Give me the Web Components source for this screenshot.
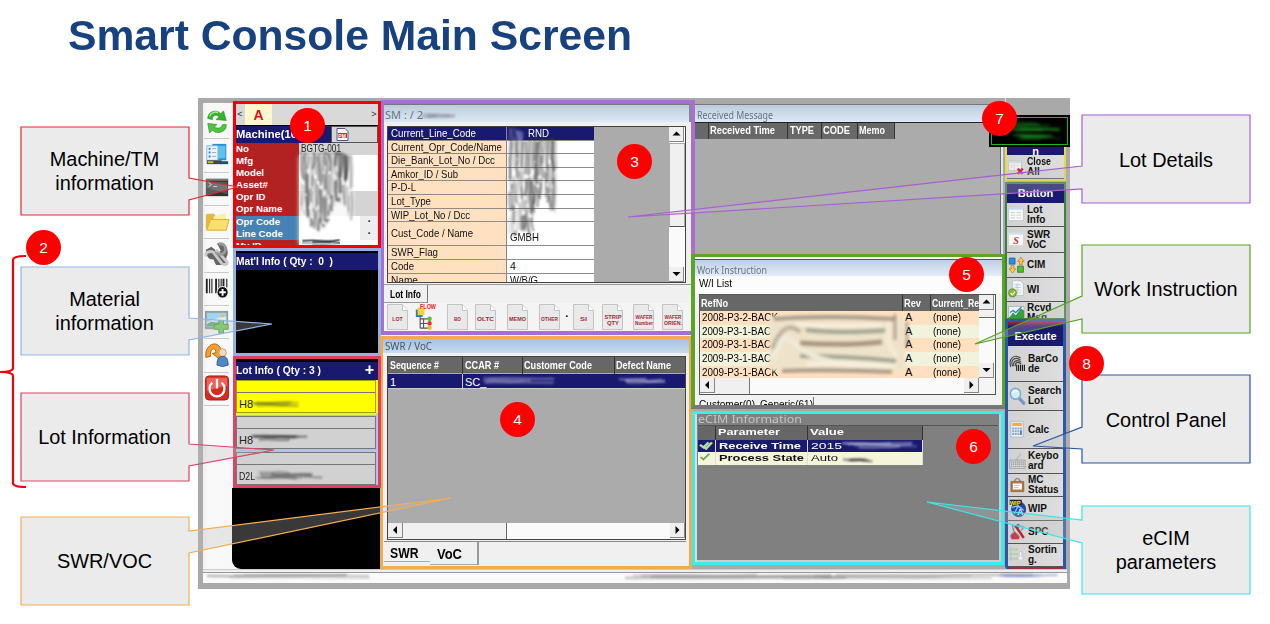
<!DOCTYPE html>
<html lang="en">
<head>
<meta charset="utf-8">
<title>Smart Console Main Screen</title>
<style>
html,body{margin:0;background:#fff}
body{width:1270px;height:624px;overflow:hidden;font-family:"Liberation Sans",Arial,sans-serif}
</style>
</head>
<body>
<smart-slide></smart-slide>
<script>
const BASE = `*{box-sizing:border-box} :host{display:block;box-sizing:border-box}`;
function component(name, css, html) {
  customElements.define(name, class extends HTMLElement {
    connectedCallback() {
      if (this.shadowRoot) return;
      const root = this.attachShadow({mode: 'open'});
      root.innerHTML = `<style>${BASE}${css}</style>` + (typeof html === 'function' ? html(this) : html);
    }
  });
}

/* Text squeezed or stretched to a given width */
customElements.define('fit-text', class extends HTMLElement {
  connectedCallback() {
    if (this.shadowRoot) return;
    const root = this.attachShadow({mode: 'open'});
    root.innerHTML = `<style>:host{display:inline-block;white-space:pre;vertical-align:top;flex:none}span{display:inline-block;transform-origin:0 50%}</style><span><slot></slot></span>`;
    const s = root.querySelector('span'), w = +this.getAttribute('w'), n = s.getBoundingClientRect().width;
    this.style.width = w + 'px';
    if (n) s.style.transform = `scaleX(${w / n})`;
  }
});

/* Scribbled-out value: streaks in one direction */
component('smear-mark', `:host{position:absolute;pointer-events:none}svg{display:block;overflow:visible}`, el => {
  const w = +el.getAttribute('w'), h = +el.getAttribute('h'), c = el.getAttribute('c') || '#333';
  const k = el.getAttribute('kind') || 'h';
  let seed = +(el.getAttribute('seed') || 7);
  const r = () => (seed = (seed * 16807) % 2147483647) / 2147483647;
  let p = '';
  if (k === 'v') {
    const peak = el.getAttribute('peak').split(',').map(Number);
    const at = t => { const i = Math.min(peak.length - 2, Math.floor(t * (peak.length - 1))), f = t * (peak.length - 1) - i; return peak[i] * (1 - f) + peak[i + 1] * f; };
    for (let x = 0; x < w; x += 2) {
      const b = at(x / w) * h;
      for (let y = r() * 5; y < b; ) {
        const l = 14 + r() * 30, e = Math.min(b, y + l);
        p += `<path d="M${x + r()} ${y}q${r() * 4 - 2} ${(e - y) / 2} ${r() * 4 - 2} ${e - y}" stroke="${c}" stroke-opacity="${.15 + r() * .6}" stroke-width="${1.200 + r() * 1.500}" fill="none"/>`;
        y = e + 1 + r() * 6;
      }
    }
  } else {
    const n = Math.max(4, h * .8);
    for (let i = 0; i < n; i++) {
      const x = r() * w * .25, y = r() * h, l = w * (.45 + r() * .5);
      p += `<path d="M${x} ${y}q${l / 4} ${r() * 2 - 1} ${l / 2} 0t${Math.min(l, w - x) / 2} ${r() * 2 - 1}" stroke="${c}" stroke-opacity="${.25 + r() * .4}" stroke-width="${1.200 + r() * 1.200}" fill="none"/>`;
    }
  }
  return `<svg width="${w}" height="${h}" style="filter:blur(${el.getAttribute('blur') || 1}px)">${p}</svg>`;
});

component('num-badge', `:host{position:absolute;width:35px;height:35px;border-radius:50%;background:#fe0000;color:#fff;font:15.5px/35px "Liberation Sans",Arial,sans-serif;text-align:center;z-index:9}`, `<slot></slot>`);

/* Callout: a box with a pointer drawn from one of its sides */
component('callout-box', `
:host{position:relative;width:168px;height:88px;display:flex;align-items:center;justify-content:center;text-align:center;font-size:19.9px;line-height:24px;color:#000}
svg{position:absolute;left:0;top:0;overflow:visible}
span{position:relative;padding-top:1px}`, el => {
  const [a, tx, ty, b] = el.getAttribute('tail').split(',').map(Number);
  const d = el.hasAttribute('right')
    ? `M0 0H168V88H0V${b}L${tx} ${ty}L0 ${a}Z`
    : `M0 0H168V${a}L${tx} ${ty}L168 ${b}V88H0Z`;
  return `<svg width="168" height="88"><path d="${d}" fill="#bcbcbc" fill-opacity=".3" stroke="${el.getAttribute('c')}" stroke-width="1.2"/></svg><span><slot></slot></span>`;
});

component('scroll-arrow', `:host{width:15px;height:15px;flex:none;background:#efefef;border-right:1px solid #888;border-bottom:1px solid #888;display:flex;align-items:center;justify-content:center}svg{display:block}`, el => {
  const a = {up: 'M1 6.500 5 2.500 9 6.500Z', down: 'M1 3 5 7 9 3Z', left: 'M6.500 1 2.500 5 6.500 9Z', right: 'M3 1 7 5 3 9Z'}[el.getAttribute('dir')];
  return `<svg width="11" height="10" viewBox="0 0 10 10"><path d="${a}"/></svg>`;
});

/* Icons */
const ICONS = {
 refresh: `<path d="M4 11C4 3 14 1 18 6l3-3 3 10-11-1 3-3C12 6 9 8 9 12Z" fill="#36b22c" stroke="#1c8a1c" stroke-width=".6"/><path d="M24 17c1 8-10 11-15 6l-3 3-2-10 10 1-3 3c5 2 8 0 9-3Z" fill="#4cc63c" stroke="#1c8a1c" stroke-width=".6"/><path d="M6 9c1-4 6-6 9-4" stroke="#a6eb8c" fill="none" stroke-width="1.500"/>`,
 monitor: `<path d="M9 3h15v17H9z" fill="#278fd2"/><path d="M11 5h12v13H11z" fill="#5bc3ee"/><path d="M3 5h12v15H3z" fill="#edf5ff" stroke="#8bb4d5"/><path d="M5 8h2M5 12h2M5 16h2" stroke="#2680ce" stroke-width="2"/><path d="M8.500 8H13M8.500 12H13M8.500 16H13" stroke="#9ab"/><path d="M3 20h16v4H3z" fill="#444"/><path d="M4 21h6v2H4z" fill="#bdcf23"/><path d="M17 21h9v3h-9z" fill="#16526e"/>`,
 terminal: `<path d="M2 5h24v18H2z" fill="#333"/><path d="M2 5h24v2H2z" fill="#777"/><path d="M3 8h22v13L3 14z" fill="#555"/><path d="m5 9 3 2-3 2M10 13h4" stroke="#ddd" fill="none"/>`,
 folder: `<path d="M2 8q0-2 2-2h7l2 3h10v14H4L2 21Z" fill="#e3b93d"/><path d="m10 9 13-4 1 6-13 2Z" fill="#fff0a5"/><path d="m3 23 4-11h20l-3 11Z" fill="#fbdf72" stroke="#dcae31"/>`,
 wrench: `<path d="M2 9 8 6l4 3 1 4 5-3-3-6C10 2 22 0 25 8c2 8-2 8-1 11l2 6H13l-3-6c-5 1-8-4-8-10Z" fill="#666"/><path d="M2 16c-1-6 8-6 9-3l8 10c2 2 6 2 6-1L13 9" stroke="#c9c9c9" stroke-width="3" fill="none"/><path d="M16 3c6-1 9 4 6 9-3 3-7 2-9 0" stroke="#999" stroke-width="3" fill="none"/>`,
 barcode: `<path d="M3 5v15M13 5v15M21 5v9" stroke="#222" stroke-width="2"/><path d="M6 5v15M8.500 5v15M16 5v14M18.500 5v10M24.500 5v9" stroke="#333" stroke-width="1.300"/><circle cx="20" cy="19" r="6" fill="#111" stroke="#fff"/><path d="M20 15.500v7M16.500 19h7" stroke="#fff" stroke-width="2"/>`,
 picture: `<path d="M1 3h25v19H1z" fill="#929c9e"/><path d="M3 5h21v14H3z" fill="#9fd4f2"/><path d="M3 14c7 0 9-5 21-5v10H3Z" fill="#d8edf4"/><path d="M3 17c6-5 10 0 14-3l4 5H3Z" fill="#5eae79"/><circle cx="20" cy="8" r="1.800" fill="#ffb44b"/><path d="M16 13h5v4h5v5h-5v4h-5v-4h-5v-5h5Z" fill="#72cd5c" stroke="#439f39"/>`,
 transfer: `<path d="M2 17C0 3 16-3 19 11l4-1-6 9-8-6 4-1C12 5 6 8 7 16Z" fill="#f4a02d" stroke="#ad6612"/><circle cx="20" cy="12" r="4" fill="#f7ddb6" stroke="#bfa072"/><path d="M14 25c0-7 2-9 6-9s6 2 6 9q-6 3-12 0Z" fill="#5289c4" stroke="#2c5f99"/>`,
 power: `<rect x="1.500" y="2" width="25" height="25" rx="4" fill="#d52c22" stroke="#98251e"/><path d="M3 4h22v9q-10 0-22 5Z" fill="#f5796a" opacity=".7"/><path d="M9 9a8 8 0 1 0 10 0" stroke="#fff" stroke-width="2.500" fill="none"/><path d="M14 5v10" stroke="#fff" stroke-width="2.500"/>`,
 close: `<path d="M1 6h20v14H1z" fill="#eee" stroke="#bbb"/><path d="M1 6h20v3H1z" fill="#d4d9de"/><path d="M10 10v9M4 12h4M4 15h4M13 12h4" stroke="#ccc"/><path d="m15 17 8 8m0-8-8 8" stroke="#d12b37" stroke-width="3.500"/>`,
 list: `<path d="M1 3h23v20H1z" fill="#fafafa" stroke="#b5bec8"/><path d="M1 3h23v4H1z" fill="#c9dbed"/><path d="M4 11h7M13 11h7M4 15h7M13 15h7M4 19h7M13 19h7" stroke="#b2bcc4"/>`,
 swr: `<path d="M1 4h23v19H1z" fill="#fafafa" stroke="#ccc"/><path d="M1 4h23v3H1z" fill="#d6e0ea"/><text x="8" y="21" font-family="Liberation Serif" font-size="16" font-weight="bold" font-style="italic" fill="#d13427">S</text>`,
 cim: `<path d="M2 3h9v9H2z" fill="#298fda" stroke="#14508d"/><path d="M15 15h9v9h-9z" fill="#51bd30" stroke="#1c6d12"/><path d="m5 14h4v5h3l-5 6-5-6h3ZM18 13v-5h-3l5-6 5 6h-3v5Z" fill="#ffcf4d" stroke="#a97111"/>`,
 wi: `<path d="M7 1h13l4 5v17H7z" fill="#f4f7f9" stroke="#a6b6c4"/><path d="M10 7h10M10 11h10M10 15h10M10 19h10M14 5v16" stroke="#a7bdd2"/><circle cx="7" cy="19" r="6" fill="#88b736" stroke="#567b17"/><path d="m4 19 2.500 3 4.500-5" stroke="#fff" stroke-width="1.800" fill="none"/>`,
 rcvd: `<path d="M1 5h24v19H1z" fill="#eef8ff" stroke="#999"/><path d="m1 22 7-8 4 4 8-10 5 3v13H1Z" fill="#33a13c"/><path d="m3 14 5-3 4 3 9-8" stroke="#2a7fca" stroke-width="2" fill="none"/>`,
 scan: `<g fill="none" stroke="#444" stroke-width="1.700"><path d="M3 19C-2 8 8-1 18 6M6 18C1 9 10 3 18 9M8 18C5 11 12 7 19 12M11 18c-3-5 3-8 8-3"/></g><path d="M12 16v9M15 16v9M18 16v9M21 16v9M24 16v9" stroke="#222" stroke-width="1.800"/>`,
 search: `<path d="m15 16 8 8" stroke="#7799bd" stroke-width="5" stroke-linecap="round"/><circle cx="10" cy="10" r="8" fill="#d0edfa" stroke="#80afd5" stroke-width="2.500"/><path d="M5 9q4-6 9-2" stroke="#fff" stroke-width="2" fill="none"/>`,
 calc: `<path d="M3 2h19v23H3z" fill="#f2f5f8" stroke="#98a8b8"/><path d="M5 4h15v5H5z" fill="#f3a955"/><g fill="#82a9ce"><path d="M5 11h3v3H5zm4 0h3v3H9zm4 0h3v3h-3zm4 0h3v3h-3zM5 15h3v3H5zm4 0h3v3H9zm4 0h3v3h-3zM5 19h3v3H5zm4 0h3v3H9zm4 0h3v3h-3z"/><path d="M17 15h3v7h-3z" fill="#517fae"/></g>`,
 keyboard: `<path d="M1 12h24v12H1z" fill="#d9dadb" stroke="#888"/><path d="M3 15h20M3 18h20M3 21h20" stroke="#8e9398" stroke-width="1.800" stroke-dasharray="2 1"/><path d="M12 12C12 6 18 9 17 2" stroke="#999" fill="none"/>`,
 clip: `<path d="M8 8q5-9 10 0" fill="none" stroke="#888" stroke-width="2"/><path d="M3 8h20v15H3z" fill="#b8783c" stroke="#8d5425"/><path d="M6 11h14v9H6z" fill="#fff"/><path d="M8 14h9M8 17h7" stroke="#aaa"/>`,
 wip: `<circle cx="15" cy="15" r="11" fill="#1d49b5" stroke="#102666"/><path d="M5 13q8-6 18 4M8 22q5-9 8-16" stroke="#8fc0f1" stroke-width="2" fill="none"/><text x="13" y="23" font-family="Liberation Sans" font-size="13" fill="#fff" font-weight="bold">A</text><path d="M1 1h19v8H1z" fill="#222"/><text x="1" y="9" font-family="Liberation Sans" font-size="9" fill="#ffee32" font-weight="bold">WIP</text>`,
 spc: `<path d="m5 3 3 1-1 7 9 8-3 4H4l-2-4 5-6Z" fill="#d8dde3" stroke="#607080"/><path d="m3 18 6-5 7 7v4H4Z" fill="#ce394d"/><path d="m10 4 13 18" stroke="#ba2635" stroke-width="4"/><circle cx="14" cy="4" r="3" fill="#7c4ca3"/><path d="m18 4 5 2-4 5" stroke="#7b9abb" stroke-width="2" fill="none"/>`,
 sort: `<g fill="#b9dda4" stroke="#84b56d" stroke-width=".5"><circle cx="3" cy="5" r="2"/><circle cx="3" cy="12" r="2"/><circle cx="3" cy="19" r="2"/></g><path d="M7 5h8M7 12h6M7 19h6" stroke="#a8bea0" stroke-width="2" stroke-dasharray="3 1"/><path d="M16 8h4v8h4l-6 7-6-7h4Z" fill="#eee" stroke="#b8c5bc"/>`,
 flow: `<path d="M1 6h8v8H1z" fill="#3376c4"/><path d="M3 4h8v8H3z" fill="#f3d438"/><path d="M6 14v12M6 16h9M6 21h9M6 26h9M10 16v10" stroke="#555" stroke-width="1.300" fill="none"/><circle cx="17" cy="16" r="2.600" fill="#59bd45"/><circle cx="17" cy="21" r="2.600" fill="#e63434"/><circle cx="17" cy="25.500" r="2.500" fill="#f3b82d"/>`,
 check: `<path d="m4 14 6 7L24 5" stroke="#6aa862" stroke-width="5" fill="none"/>`,
 checks: `<path d="m2 12 7 7L19 6M9 17l5 5L26 6" stroke="#b4e0a8" stroke-width="5" fill="none"/>`
};
component('ui-icon', `svg{display:block}`, el => {
  const s = el.getAttribute('s') || 28;
  return `<svg width="${s}" height="${el.getAttribute('h') || s}" viewBox="0 0 28 28" preserveAspectRatio="none">${ICONS[el.getAttribute('n')]}</svg>`;
});

component('tool-rail', `
:host{background:linear-gradient(90deg,#f0f0f0,#f9f9f9 5px,#f8f8f8);padding:3px 4px 0 1px;display:flex;flex-direction:column;margin-top:5px}
div{height:33.33px;flex:none;border-bottom:1px solid #c9c9c9;display:flex;align-items:center;justify-content:center}
ui-icon{transform:translateY(-1px)}`,
 ['refresh','monitor','terminal','folder','wrench','barcode','picture','transfer','power'].map(n => `<div><ui-icon n="${n}" s="26" h="27"></ui-icon></div>`).join(''));

component('machine-panel', `
:host{border:3px solid #f40004;height:147px;background:#000;display:flex;flex-direction:column;overflow:hidden;position:relative;font:bold 9.7px/11px "Liberation Sans"}
.tabs{height:21px;background:#d9d9d9;display:flex;align-items:center;color:#333;font-size:9px;flex:none}
.tabs b{width:27px;height:21px;background:#fff8cf;color:#e11014;font-size:14px;line-height:22px;text-align:center;margin-left:1px}
.tabs i{font-style:normal;width:8px;text-align:center;font-weight:400}
.tabs i:last-child{margin-left:auto}
.head{height:17px;margin:1px 0 0;display:flex;background:#191970;color:#fff;font-size:11px;line-height:16px;flex:none}
.btn{margin-left:auto;width:47px;background:#d6d6d6;border:1px solid #555;display:flex;align-items:center;padding-left:4px}
.grid{display:grid;grid-template-columns:63px 79px;grid-auto-rows:12.100px;color:#fff}
.grid>*{background:#b22222;white-space:nowrap}
.grid .b{background:#4682b4}
.grid .v{background:#fff;color:#222;padding-left:2px;position:relative;font-size:10.500px;font-weight:400}
.grid .g{background:#d4d4d4}
.dd{position:absolute;right:0;top:0;width:18px;height:12px;background:#ededed;text-align:center;line-height:10px;font-weight:bold}
.veil{position:absolute;left:63px;top:52px;width:54px;height:90px;background:#fff;opacity:.85;filter:blur(2px)}`,
`<div class="tabs"><i>&lt;</i><b>A</b><i>&gt;</i></div>
<div class="head"><fit-text w="64">Machine(16.</fit-text><div class="btn"><svg width="13" height="13"><path d="M1 .5h8l3 3v9H1z" fill="#fff" stroke="#558"/><path d="M2 5h9v5H2z" fill="#d22"/><text x="2.300" y="9.500" font-family="Liberation Sans" font-size="5" fill="#fff">PM</text></svg></div></div>
<div class="grid"><span>No</span><span class="v g"><fit-text w="40">BGTG-001</fit-text></span><span>Mfg</span><span class="v"></span><span>Model</span><span class="v"></span><span>Asset#</span><span class="v"></span><span>Opr ID</span><span class="v g"></span><span>Opr Name</span><span class="v g"></span><span class="b">Opr Code</span><span class="v"><i class="dd">·</i></span><span class="b">Line Code</span><span class="v"><i class="dd">·</i></span><span>My IP</span><span class="v"></span></div>
<div class="veil"></div>
<smear-mark kind="v" w="52" h="88" peak=".68,.85,.92,.8,.55,.62,.84" c="#333" seed="11" style="left:65px;top:47px"></smear-mark>
<smear-mark w="46" h="6" seed="19" blur=".6" style="left:66px;top:136px"></smear-mark>`);

component('material-panel', `
:host{border:3px solid #93b1e1;height:108px;background:#000;color:#fff;font:bold 11px/17px "Liberation Sans"}
div{height:17px;background:#191970;margin-top:2px}`,
`<div><fit-text w="97">Mat'l Info ( Qty :  0  )</fit-text></div>`);

component('lot-panel', `
:host{border:3px solid #df4066;height:132px;background:#000;font:bold 11px/17px "Liberation Sans";position:relative}
.h{height:18px;margin-top:3px;background:#191970;color:#fff;display:flex;justify-content:space-between;padding-right:4px}
.h i{font:bold 16px/16px "Liberation Sans"}
.lots{background:#b5c3e2;display:flex;flex-direction:column;height:105px}
.lot{margin-right:2px;border:1px solid #777;background:#d1d1d1;font:11px/20px "Liberation Sans";color:#222;flex:none;margin-bottom:3px}
.lot p{margin:0;height:12px;border-bottom:1px solid #777}.lot div{padding:1px 0 0 2px;height:19px;position:relative}
.lot.y{background:#ff0;border-color:#a1a000;box-shadow:2px 0 #ff0,0 2px #e9f04a}
.lot:last-child{margin-bottom:0}`,
`<div class="h"><fit-text w="85">Lot Info ( Qty : 3 )</fit-text><i>+</i></div>
<div class="lots"><div class="lot y"><p></p><div>H8<smear-mark w="54" h="6" seed="5" style="left:14px;top:7px"></smear-mark></div></div>
<div class="lot"><p></p><div>H8<smear-mark w="66" h="6" seed="9" style="left:14px;top:6px"></smear-mark></div></div>
<div class="lot"><p></p><div><fit-text w="16">D2L</fit-text><smear-mark w="66" h="7" seed="15" style="left:19px;top:6px"></smear-mark></div></div></div>`);

component('lot-details', `
:host{border:4px solid #a66fd0;border-left-width:3px;width:314px;height:235px;background:#f0f0f0;position:relative;z-index:1;display:flex;flex-direction:column;font:11px/13.6px "Liberation Sans"}
.t{height:18px;border-top:1px solid #777;background:linear-gradient(#bccbdc,#dde9f5);color:#667480;font:11px/20px "Noto Sans";padding-left:1px;flex:none;border-right:2px solid #888;position:relative}
.f{margin:4px 5px 0 3px;height:157px;border:1px solid #444;display:flex;background:#ababab;overflow:hidden;flex:none}
.g{display:grid;grid-template-columns:118px 88px;grid-template-rows:13.500px repeat(6,13.650px) 23.700px repeat(3,13.900px);color:#111;position:relative}
.g>*{border-bottom:1px solid #908b86;padding:1px 0 0 3px;background:#ffe1c1;white-space:nowrap;overflow:hidden;display:flex;align-items:center}
.g .v{background:#fff;border-left:1px solid #888;font-size:10.500px}
.g .n{background:#191970;color:#fff}
.cust{align-items:flex-end!important}
.cust fit-text{filter:blur(.5px)}
.sb{margin-left:auto;width:16px;background:#fafafa;display:flex;flex-direction:column;justify-content:space-between}
.sb div{flex:none;height:84px;background:#f0f0f0;border:1px solid #aaa;border-bottom-color:#555;margin-bottom:40px}
.tab{height:19px;margin-top:1px;border-top:1px solid #999;flex:none;display:flex;font:bold 10px/20px "Liberation Sans"}
.tab b{width:44px;border-right:1px solid #777;border-bottom:1px solid #999;padding-left:6px;}
.docs{display:flex;align-items:center;padding:1px 0 0 3px;flex:1;background:#f4f4f4;min-height:0}
.docs svg,.docs ui-icon{flex:none;display:block}`,
() => {
  const rows = ['Current_Opr_Code/Name','Die_Bank_Lot_No / Dcc','Amkor_ID / Sub','P-D-L','Lot_Type','WIP_Lot_No / Dcc','Cust_Code / Name','SWR_Flag','Code','Name'];
  const ws = [111,104,67,25,40,79,82,47,23,27];
  const vals = {Code: '4', Name: '<fit-text w="28">W/B/G</fit-text>', 'Cust_Code / Name': '<fit-text w="29">GMBH</fit-text>'};
  const doc = (a, b, gap) => `<svg width="22" height="26" style="margin-left:${gap}px"><path d="M.5.5h15l5 6v19H.500Z" fill="#e9e9e9" stroke="#c3c3c3"/><path d="M15.500.5v6h5" fill="#fff" stroke="#c3c3c3"/><g font-family="Liberation Sans" font-weight="bold" font-size="5.800" fill="#a8283a" text-anchor="middle">${b ? `<text x="11" y="15" textLength="17" lengthAdjust="spacingAndGlyphs">${a}</text><text x="11" y="21" ${b.length > 3 ? 'textLength="18" lengthAdjust="spacingAndGlyphs"' : ''}>${b}</text>` : `<text x="10.500" y="17" ${a.length > 3 ? 'textLength="17" lengthAdjust="spacingAndGlyphs"' : `textLength="${a.length * 3.500}" lengthAdjust="spacingAndGlyphs"`}>${a}</text>`}</g></svg>`;
  return `<div class="t">SM :  / 2<smear-mark w="34" h="5" c="#667" seed="4" style="left:37px;top:9px"></smear-mark></div>
<div class="f"><div class="g"><span class="n"><fit-text w="85">Current_Line_Code</fit-text></span><span class="v n" style="padding-left:21px"><fit-text w="21">RND</fit-text></span>
${rows.map((t, i) => `<span><fit-text w="${ws[i]}">${t}</fit-text></span><span class="v${i === 6 ? ' cust' : ''}">${vals[t] || ''}</span>`).join('')}
<smear-mark kind="v" w="48" h="102" peak=".95,.98,.9,.98,.7,.55,.72,.75" c="#444" seed="23" style="left:121px;top:10px;border:0;padding:0;background:none;overflow:visible"></smear-mark>
<smear-mark kind="v" w="16" h="14" peak=".9,1,.8" c="#b9bae0" seed="6" style="left:121px;top:1px;border:0;padding:0;background:none;overflow:visible"></smear-mark></div>
<div class="sb"><scroll-arrow dir="up"></scroll-arrow><div></div><scroll-arrow dir="down"></scroll-arrow></div></div>
<div class="tab"><b><fit-text w="31">Lot Info</fit-text></b></div>
<div class="docs">${doc('LOT','',0)}<div style="position:relative;margin:0 11px 0 6px"><ui-icon n="flow" s="24" h="26"></ui-icon><svg width="17" height="7" style="position:absolute;left:5px;top:-1px"><text x="0" y="6" font-size="6.500" font-weight="bold" font-family="Liberation Sans" fill="#e01c20" textLength="16" lengthAdjust="spacingAndGlyphs">FLOW</text></svg></div>${doc('BO','',-3)}${doc('OLTC','',6)}${doc('MEMO','',10)}${doc('OTHER','',10)}<b style="width:12px;text-align:center">·</b>${doc('SI','',0)}${doc('STRIP','QTY',7)}${doc('WAFER','Number',9)}${doc('WAFER','ORIEN.',7)}</div>`;
});

component('voc-panel', `
:host{border:3px solid #f0ab51;height:234px;margin-left:-1px;background:#f0f0f0;display:flex;flex-direction:column;font:bold 10px/18px "Liberation Sans"}
.t{height:14px;background:linear-gradient(#a3c2e4,#c9dbef);color:#47535f;font:10.500px/15px "Noto Sans";padding-left:2px;flex:none}
.f{margin:3px 3px 0 4px;height:184px;border:1px solid #444;background:#ababab;display:flex;flex-direction:column;flex:none}
.r{display:grid;grid-template-columns:75px 60px 92px 1fr;height:16px;background:#676767;color:#fff}
.r span{border-right:1px solid #333;padding-left:2px;white-space:nowrap;position:relative}.r span:last-child{border:0}
.d{height:15px;margin-top:1px;background:#191970;font-weight:400;font-size:11px;line-height:16px;border-bottom:1px solid #ccc}
.r.d span{border:0}.r.d span:first-child{border-right:1px solid #ccc}
.s{margin-top:auto;display:flex;height:16px;background:#fafafa}.s div{width:104px;background:#f1f1f1;border-right:1px solid #666}
.s scroll-arrow:last-child{margin-left:auto}
.tabs{margin:1px 3px 0 1px;border-top:1px solid #888;display:flex;height:23px;font:bold 14px/23px "Liberation Sans"}
.tabs b{width:46px;height:20px;padding-left:6px;border-bottom:1px solid #aaa}.tabs b+b{width:49px;height:23px;border-right:2px solid #999;line-height:25px;padding-left:7px}`,
`<div class="t"><fit-text w="47">SWR / VoC</fit-text></div><div class="f"><div class="r"><span><fit-text w="49">Sequence #</fit-text></span><span><fit-text w="34">CCAR #</fit-text></span><span style="padding-left:1px"><fit-text w="68">Customer Code</fit-text></span><span style="padding-left:1px"><fit-text w="55">Defect Name</fit-text></span></div>
<div class="r d"><span>1</span><span>SC_<smear-mark w="82" h="6" c="#cfd2f0" seed="3" style="left:20px;top:4px"></smear-mark></span><span></span><span><smear-mark w="58" h="5" c="#cfd2f0" seed="8" style="left:4px;top:5px"></smear-mark></span></div>
<div class="s"><scroll-arrow dir="left"></scroll-arrow><div></div><scroll-arrow dir="right"></scroll-arrow></div></div>
<div class="tabs"><b><fit-text w="28.500">SWR</fit-text></b><b><fit-text w="25">VoC</fit-text></b></div>`);

component('message-panel', `
:host{height:150px;margin-left:3px;margin-right:2px;border-top:1px solid #777;border-right:2px solid #e3e9ef;background:#ababab;font:bold 10px/15px "Liberation Sans";box-shadow:inset -1px 0 #667}
.t{height:18px;background:linear-gradient(#bccbdc,#dde9f5);border-bottom:1px solid #222;color:#667480;font:11px/20px "Noto Sans";padding-left:2px}
.r{display:grid;grid-template-columns:14px 79px 34px 36px 37px;width:200px;height:16px;background:#686868;color:#fff}
.r span{border-right:1px solid #333;white-space:nowrap;padding-left:1px}`,
`<div class="t"><fit-text w="76">Received Message</fit-text></div><div class="r"><span></span><span><fit-text w="65">Received Time</fit-text></span><span style="padding-left:2px"><fit-text w="24">TYPE</fit-text></span><span><fit-text w="27">CODE</fit-text></span><span><fit-text w="26">Memo</fit-text></span></div>`);

component('instruction-panel', `
:host{height:155px;border:3px solid #5ba526;border-bottom:4px solid #777;background:#f2f2f2;position:relative;z-index:2;overflow:hidden;font:11px/13.7px "Liberation Sans";margin-left:-1px;border-left-width:4px}
.t{height:17px;margin-top:2px;border-top:1px solid #556;background:linear-gradient(#bccfe4,#e4edf7);color:#667480;font:11px/20px "Noto Sans";padding-left:2px}
.l{height:18px;background:#fcfcfc;padding:0 0 0 4px;line-height:14px}
.f{margin:0 6px 0 4px;height:101px;border:1px solid #555;display:grid;grid-template:1fr 16px/1fr 16px;background:#f5f5f5}
.g{overflow:hidden;display:grid;grid-template-columns:203px 28px 60px;grid-template-rows:16px repeat(5,13.700px);position:relative}
.g>*{white-space:nowrap;padding-left:2px}
.g .h{background:#676767;color:#fff;font:bold 10px/17px "Liberation Sans";border-right:1px solid #333;padding-left:1px}
.p{background:#ffe1c2}.q{background:#f2f3dc}
.v,.s{display:flex;background:#fafafa}.v{flex-direction:column}.v div{height:8px;background:#f0f0f0;border-bottom:1px solid #666}.v scroll-arrow:last-child{margin-top:auto}
.s div{width:35px;background:#f0f0f0;border-right:1px solid #777}.s scroll-arrow:last-child{margin-left:auto}
.g svg{position:absolute;left:66px;top:15px;padding:0}
.tabs{display:flex;font:10.500px/14px "Liberation Sans";margin-left:4px;gap:5px;margin-top:2px;color:#000}
.tabs span+span{border-right:1px solid #777;border-top:0}`,
() => `<div class="t"><fit-text w="70">Work Instruction</fit-text></div><div class="l"><fit-text w="33">W/I List</fit-text></div>
<div class="f"><div class="g"><span class="h"><fit-text w="27">RefNo</fit-text></span><span class="h"><fit-text w="17">Rev</fit-text></span><span class="h"><fit-text w="47">Current_Re</fit-text></span>
${['2008-P3-2-BACK','2009-P3-1-BAC','2009-P3-1-BAC','2009-P3-1-BAC','2009-P3-1-BACK'].map((t, i) => { const c = i % 2 ? 'q' : 'p'; return `<span class="${c}"><fit-text w="${t.length > 13 ? 76 : 69}">${t}</fit-text></span><span class="${c}">A</span><span class="${c}"><fit-text w="28">(none)</fit-text></span>`; }).join('')}
<svg width="145" height="70" style="overflow:visible"><g style="filter:blur(1.600px)" fill="none"><path d="M3 6Q70 0 139 8V60Q70 66 3 60Z" fill="#efe2ca"/><path d="M8 9Q60 5 128 9M16 61Q60 59 126 62" stroke="#7f6b58" stroke-width="4" opacity=".6"/><path d="M40 20Q76 24 124 20M34 46Q80 46 130 51" stroke="#8e9782" stroke-width="4" opacity=".8"/><path d="M34 33Q80 36 116 32" stroke="#8f7d6a" stroke-width="5" opacity=".75"/><path d="M8 50Q14 16 32 36T130 56" stroke="#eeead8" stroke-width="5"/><path d="M6 39Q18 8 34 22" stroke="#9d917e" stroke-width="4" opacity=".6"/><path d="M122 12Q120 40 132 46" stroke="#f6ead4" stroke-width="5"/><path d="M129 4V30M141 12V38" stroke="#7a6655" stroke-width="3" opacity=".5"/><path d="M30 14Q70 17 116 15M40 54Q90 53 124 56" stroke="#fcf3e2" stroke-width="2.500"/></g></svg></div>
<div class="v"><scroll-arrow dir="up"></scroll-arrow><div></div><scroll-arrow dir="down"></scroll-arrow></div>
<div class="s"><scroll-arrow dir="left"></scroll-arrow><div></div><scroll-arrow dir="right"></scroll-arrow></div><div></div></div>
<div class="tabs"><span><fit-text w="56">Customer(0)</fit-text></span><span><fit-text w="53">Generic(61)</fit-text></span></div>`);

component('ecim-panel', `
:host{height:154px;margin-top:2px;border:3px solid #3beeee;background:#808080;color:#fff;font:bold 10px/12px "Liberation Sans";box-shadow:inset 2px 0 #ddd,inset -2px -2px #ccc;padding:0 3px 0 3px;margin-right:1px}
.t{height:12px;border-bottom:1px solid #555;color:#c4c4c4;font:10px/10px "Noto Sans"}
.g{display:grid;grid-template-columns:18px 92px 115px;width:225px;grid-template-rows:14px 12px 13px;background:#191970;color:#fff;font-size:9.500px}
.g>*{border-right:1px solid #ddd;padding-left:3px;white-space:nowrap;position:relative}.g>.h{background:#676767;border-color:#333}
.g>.w{background:#f5f5dc;color:#111}
ui-icon{margin-left:-2px}`,
`<div class="t"><fit-text w="104">eCIM Information</fit-text></div><div class="g"><span class="h"></span><span class="h" style="padding-left:2px"><fit-text w="62">Parameter</fit-text></span><span class="h" style="padding-left:2px"><fit-text w="34">Value</fit-text></span>
<span><ui-icon n="checks" s="14" h="11"></ui-icon></span><span><fit-text w="82">Receive Time</fit-text></span><span style="font-weight:400"><fit-text w="31">2015</fit-text><smear-mark w="74" h="6" c="#cfd2f0" seed="31" style="left:34px;top:3px"></smear-mark></span>
<span class="w"><ui-icon n="check" s="12" h="10"></ui-icon></span><span class="w"><fit-text w="85">Process State</fit-text></span><span class="w" style="font-weight:400"><fit-text w="27">Auto</fit-text><smear-mark w="30" h="5" seed="13" style="left:35px;top:4px"></smear-mark></span></div>`);

component('side-button', `
:host{display:flex;align-items:center;background:linear-gradient(90deg,#d2d2d2,#dedede);border-bottom:1px solid #555;font:bold 10px/10px "Liberation Sans";color:#111;overflow:hidden;padding-left:1px;gap:0;flex:none}
ui-icon{flex:none;width:19px}span{white-space:pre-line}`,
 el => `<ui-icon n="${el.getAttribute('n')}" s="18" h="19"></ui-icon><span><slot></slot></span>`);

component('control-column', `
:host{display:flex;flex-direction:column;padding-top:44px;font:bold 11px/18px "Liberation Sans";color:#fff;position:relative;margin-left:-1px}
section{display:flex;flex-direction:column;overflow:hidden;flex:none}
.a{border:2px solid #e9df34;height:39px}.b{border:2px solid #3d813f;height:138px;margin-top:1px}
.c{border:3px solid #2b57a8;height:253px;margin-top:-1px;background:linear-gradient(#b01f35,#191970 5px);border-bottom-left-radius:6px;box-shadow:inset 0 -2px #a02b45;position:relative}
h4{margin:0;background:#191970;font:inherit;text-align:center;flex:none}
.lcd{position:absolute;left:-16px;top:17px;width:81px;height:32px;background:#000;border:1px solid #000;padding:1px;z-index:2}
.lcd div{border:1px solid #22b522;height:28px;position:relative}`,
`<section class="a"><h4 style="height:11px;line-height:11px;margin-top:0;padding-top:2px">n</h4><side-button n="close" style="height:24px"><fit-text w="24">Close</fit-text>
All</side-button></section>
<section class="b"><h4 style="height:19px">Button</h4><side-button n="list" style="height:24px">Lot
Info</side-button><side-button n="swr" style="height:26px">SWR
VoC</side-button><side-button n="cim" style="height:25px">CIM</side-button><side-button n="wi" style="height:24px">WI</side-button><side-button n="rcvd" style="height:22px">Rcvd
Msg</side-button></section>
<section class="c"><h4 style="height:24px;line-height:28px;background:none">Execute</h4><side-button n="scan" style="height:36px">BarCo
de</side-button><side-button n="search" style="height:29px">Search
Lot</side-button><side-button n="calc" style="height:38px">Calc</side-button><side-button n="keyboard" style="height:25px">Keybo
ard</side-button><side-button n="clip" style="height:23px">MC
Status</side-button><side-button n="wip" style="height:24px">WIP</side-button><side-button n="spc" style="height:23px">SPC</side-button><side-button n="sort" style="height:23px">Sortin
g.</side-button></section>
<div class="lcd"><div><smear-mark w="50" h="18" c="#1f9a24" seed="41" blur="1.500" style="left:20px;top:4px"></smear-mark></div></div>`);

component('status-strip', `
:host{grid-column:1/-1;height:14px;background:#fafafa;border-top:1px solid #ccc;position:relative;box-shadow:inset 0 2px #eee,inset 0 3px #999;margin-right:-1px}`,
`<smear-mark w="160" h="4" c="#777" seed="17" style="left:4px;top:5px"></smear-mark><smear-mark w="250" h="4" c="#888" seed="21" style="left:422px;top:5px"></smear-mark><smear-mark w="230" h="4" c="#888" seed="29" style="left:580px;top:5px"></smear-mark><smear-mark w="60" h="3" c="#77c" seed="2" style="left:796px;top:5px"></smear-mark>`);

component('console-window', `
:host{width:872px;height:491px;background:#a9a9a9;padding:0 4px 6px 5px;display:grid;grid-template-columns:30px 148px 311px 313px 1px 60px;grid-template-rows:471px 14px}
.col{display:flex;flex-direction:column;min-width:0}
.l{padding-top:3px;background:linear-gradient(#a9a9a9 3px,transparent 3px),#f6f6f6}
.rest{flex:1;background:#000;border-bottom-left-radius:9px;margin-left:-1px;border-left:0}
.m{padding-top:2px;gap:1px;background:linear-gradient(#a9a9a9 4px,#f3f3f3 4px)}
.r{padding-top:6px;background:#a9a9a9}.gap{background:#d5d9dd}
status-strip{margin-top:0}`,
`<tool-rail></tool-rail>
<div class="col l"><machine-panel></machine-panel><material-panel></material-panel><lot-panel></lot-panel><div class="rest"></div></div>
<div class="col m"><lot-details></lot-details><voc-panel></voc-panel></div>
<div class="col r"><message-panel></message-panel><instruction-panel></instruction-panel><ecim-panel></ecim-panel></div>
<div class="gap"></div><control-column></control-column>
<status-strip></status-strip>`);

component('smart-slide', `
:host{position:relative;width:1270px;height:624px;background:#fff;display:grid;grid-template:98px 1fr/198px 872px 200px;overflow:hidden;align-items:start}
h1{grid-column:1/-1;margin:0;padding:11px 0 0 67.500px;font:bold 42.700px/48px "Liberation Sans";color:#17427f;height:98px}
.side{display:flex;flex-direction:column;position:relative;z-index:5}
.lt{padding:28.500px 0 0 20.500px;gap:52px}
.lt callout-box:nth-child(2){margin-bottom:-14px}
.lt callout-box:nth-child(3){margin-bottom:-16px}
.rt{padding:17px 0 0 12px;gap:41.500px}
.rt callout-box:nth-child(2){margin-bottom:1px}
.rt callout-box:nth-child(3){margin-bottom:1px}
.br{position:absolute;left:0;top:250px;z-index:5}`,
`<h1><fit-text w="564">Smart Console Main Screen</fit-text></h1>
<div class="side lt">
<callout-box c="#e02a30" tail="51,217,60,73">Machine/TM<br>information</callout-box>
<callout-box c="#92b3e8" tail="51,251,57,73">Material<br>information</callout-box>
<callout-box c="#dc4468" tail="51,253,57,73">Lot Information</callout-box>
<callout-box c="#f3ad52" tail="14,430,-19,36">SWR/VOC</callout-box></div>
<console-window></console-window>
<div class="side rt">
<callout-box right c="#a95fd2" tail="51,-454,102,74">Lot Details</callout-box>
<callout-box right c="#55a522" tail="51,-107,99,74">Work Instruction</callout-box>
<callout-box right c="#2956a4" tail="52,-49,71,74">Control Panel</callout-box>
<callout-box right c="#38e6e6" tail="14,-155,-4,37">eCIM<br>parameters</callout-box></div>
<svg class="br" width="30" height="245"><path d="M26 6Q13 6 13 10V118Q13 122 0 122M0 122Q13 122 13 126V233Q13 237 26 237" fill="none" stroke="#f00008" stroke-width="2.200"/></svg>
<num-badge style="left:290px;top:108px">1</num-badge><num-badge style="left:26px;top:230px">2</num-badge><num-badge style="left:617px;top:144px">3</num-badge><num-badge style="left:500px;top:402px">4</num-badge><num-badge style="left:949px;top:257px">5</num-badge><num-badge style="left:956px;top:429px">6</num-badge><num-badge style="left:982px;top:101px">7</num-badge><num-badge style="left:1069px;top:346px">8</num-badge>`);
</script>
</body>
</html>
